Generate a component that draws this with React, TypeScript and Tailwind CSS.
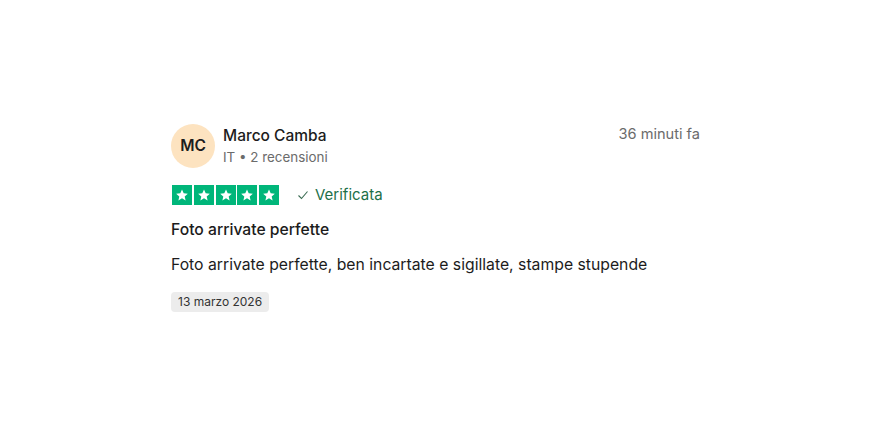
import React from "react";

function Star() {
  return (
    <div className="w-5 h-5 bg-[#00b67a] flex items-center justify-center">
      <svg width="14" height="14" viewBox="0 0 24 24">
        <path
          d="M12 2.5l2.9 6.6 7.1.6-5.4 4.7 1.6 7-6.2-3.7-6.2 3.7 1.6-7L2 9.7l7.1-.6z"
          fill="#fff"
        />
      </svg>
    </div>
  );
}

export default function App() {
  return (
    <div
      className="w-[896px] h-[448px] bg-white flex justify-center"
      style={{ fontFamily: "Inter, 'Noto Sans', sans-serif" }}
    >
      <div className="w-[530px] pt-[124px] ml-[-24px]">
        <div className="flex items-start justify-between">
          <div className="flex items-center gap-[8px]">
            <div className="w-[44px] h-[44px] rounded-full bg-[#fde3c0] flex items-center justify-center text-[15.5px] font-semibold text-[#1c1c1c]">
              MC
            </div>
            <div className="flex flex-col">
              <span className="text-[15.5px] font-medium text-[#1c1c1c] leading-[22px]">Marco Camba</span>
              <span className="text-[13.4px] text-[#6b6b6b] leading-[20px]">IT • 2 recensioni</span>
            </div>
          </div>
          <span className="text-[14.6px] text-[#6b6b6b] mt-[0px] mr-[1px]">36 minuti fa</span>
        </div>
        <div className="flex items-center mt-[16px]">
          <div className="flex gap-[1.75px] ml-[1px]">
            <Star />
            <Star />
            <Star />
            <Star />
            <Star />
          </div>
          <div className="flex items-center gap-[6px] ml-[18px] text-[15px] text-[#1d7048]">
            <svg width="12" height="12" viewBox="0 0 12 12" fill="none">
              <path d="M1.5 6.5l3 3 6-7" stroke="#3a6b52" strokeWidth="1.1" />
            </svg>
            <span>Verificata</span>
          </div>
        </div>
        <div className="mt-[12px] text-[15.7px] font-medium text-[#1c1c1c] leading-[22px]">
          Foto arrivate perfette
        </div>
        <div className="mt-[13px] text-[15.75px] text-[#1c1c1c] leading-[22px]">
          Foto arrivate perfette, ben incartate e sigillate, stampe stupende
        </div>
        <div className="mt-[12px]">
          <span className="inline-block bg-[#ececec] rounded-[4px] px-[7px] py-[2px] text-[12px] text-[#333] leading-[16px]">
            13 marzo 2026
          </span>
        </div>
      </div>
    </div>
  );
}
